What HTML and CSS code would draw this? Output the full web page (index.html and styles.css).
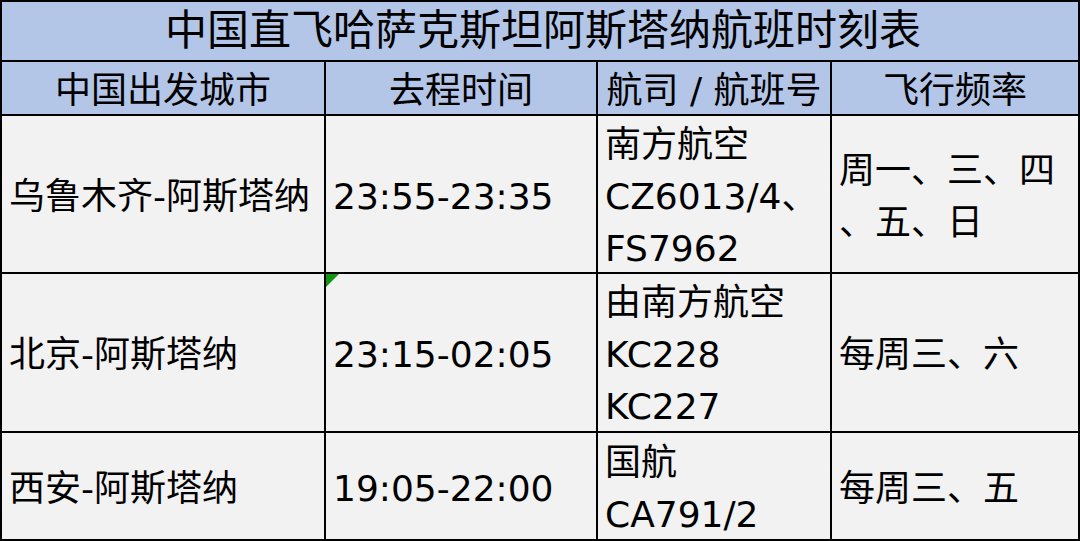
FILE: index.html
```html
<!DOCTYPE html>
<html lang="zh-CN">
<head>
<meta charset="utf-8">
<title>中国直飞哈萨克斯坦阿斯塔纳航班时刻表</title>
<link rel="stylesheet" href="styles.css">
</head>
<body>
<div class="sheet">
  <div class="title">中国直飞哈萨克斯坦阿斯塔纳航班时刻表</div>

  <div class="hd">中国出发城市</div>
  <div class="hd">去程时间</div>
  <div class="hd">航司 / 航班号</div>
  <div class="hd">飞行频率</div>

  <div class="cell">乌鲁木齐-阿斯塔纳</div>
  <div class="cell">23:55-23:35</div>
  <div class="cell">南方航空<br>CZ6013/4、<br>FS7962</div>
  <div class="cell">周一、三、四<br>、五、日</div>

  <div class="cell">北京-阿斯塔纳</div>
  <div class="cell flagged"><span class="mark"></span>23:15-02:05</div>
  <div class="cell">由南方航空<br>KC228<br>KC227</div>
  <div class="cell">每周三、六</div>

  <div class="cell">西安-阿斯塔纳</div>
  <div class="cell">19:05-22:00</div>
  <div class="cell">国航<br>CA791/2</div>
  <div class="cell">每周三、五</div>
</div>
</body>
</html>
```

FILE: styles.css
```css
html, body {
  margin: 0;
  padding: 0;
  background: #ffffff;
}

.sheet {
  width: 1080px;
  height: 541px;
  box-sizing: border-box;
  display: grid;
  grid-template-columns: 322px 270px 232px 246px;
  grid-template-rows: 58px 52px 156px 157px 106px;
  gap: 2px;
  padding: 2px;
  background: #000000;
  font-family: "DejaVu Sans", "Noto Sans CJK SC", sans-serif;
  color: #000000;
}

.title {
  grid-column: 1 / -1;
  background: #b4c6e7;
  display: flex;
  align-items: center;
  justify-content: center;
  font-size: 42px;
  line-height: 52px;
  padding-left: 6px;
  white-space: nowrap;
}

.hd {
  background: #b4c6e7;
  display: flex;
  align-items: center;
  justify-content: center;
  box-sizing: border-box;
  padding-top: 6px;
  font-size: 36px;
  line-height: 44px;
  white-space: nowrap;
}

.cell {
  background: #f2f2f2;
  display: flex;
  align-items: center;
  box-sizing: border-box;
  padding: 5px 7px 0 7px;
  font-size: 36px;
  line-height: 52px;
  white-space: nowrap;
}

.flagged {
  position: relative;
}

.mark {
  position: absolute;
  left: 0;
  top: 0;
  width: 0;
  height: 0;
  border-top: 13px solid #139213;
  border-right: 13px solid transparent;
}
```
